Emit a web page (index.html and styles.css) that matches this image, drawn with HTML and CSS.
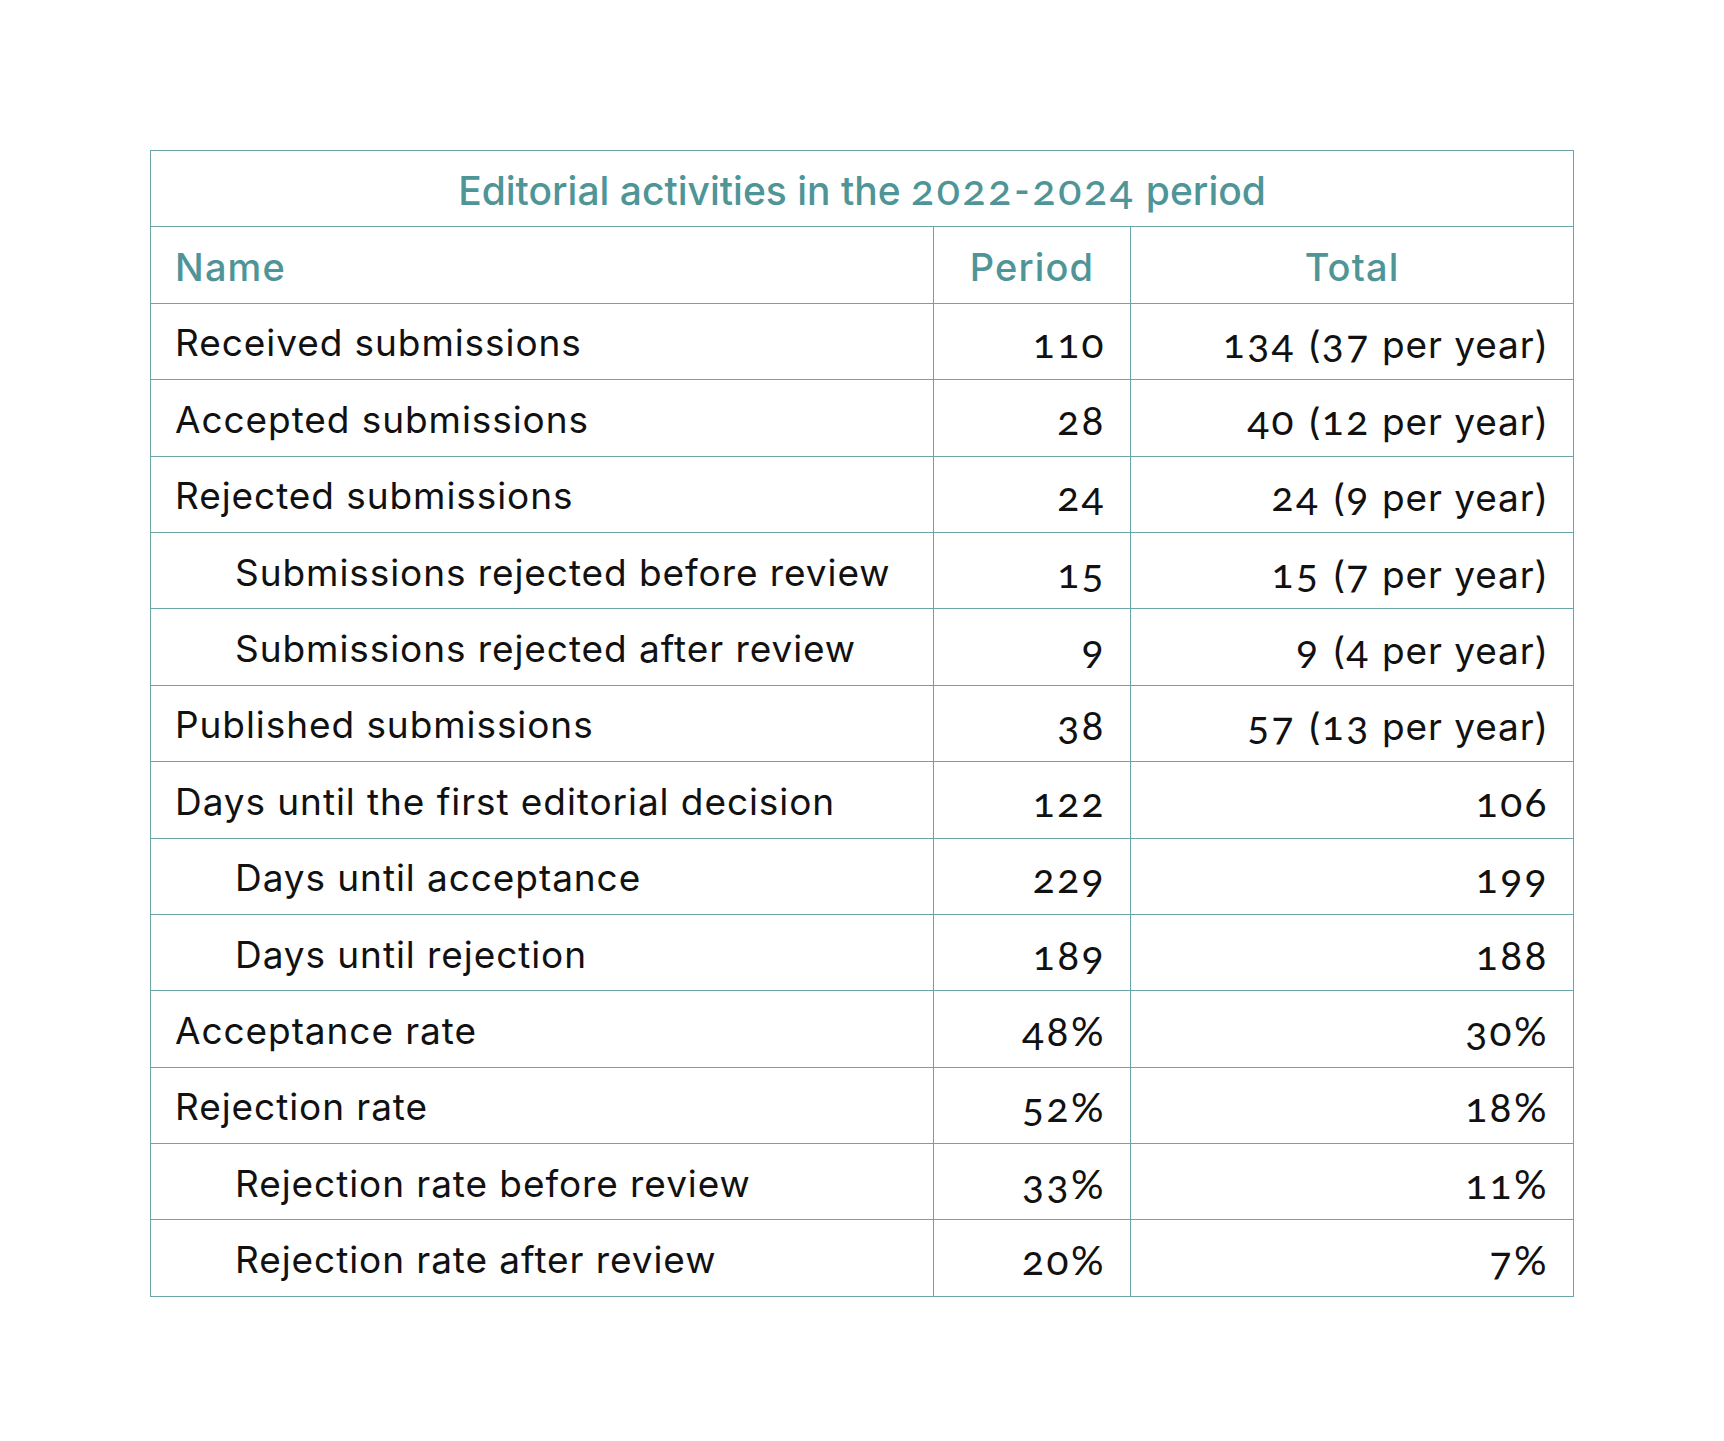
FILE: index.html
```html
<!DOCTYPE html>
<html lang="en">
<head>
<meta charset="utf-8">
<title>Editorial activities</title>
<link rel="stylesheet" href="styles.css">
</head>
<body>
<main class="page">
  <table class="stats">
    <colgroup>
      <col class="c-name">
      <col class="c-period">
      <col class="c-total">
    </colgroup>
    <thead>
      <tr class="title-row"><th colspan="3" class="title">Editorial activities in the <span class="n">2022-2024</span> period</th></tr>
      <tr class="head-row">
        <th class="h-name">Name</th>
        <th class="h-center">Period</th>
        <th class="h-center">Total</th>
      </tr>
    </thead>
    <tbody>
      <tr><td class="name">Received submissions</td><td class="num"><span class="n">110</span></td><td class="num"><span class="n">134</span> (<span class="n">37</span> per year)</td></tr>
      <tr><td class="name">Accepted submissions</td><td class="num"><span class="n">28</span></td><td class="num"><span class="n">40</span> (<span class="n">12</span> per year)</td></tr>
      <tr><td class="name">Rejected submissions</td><td class="num"><span class="n">24</span></td><td class="num"><span class="n">24</span> (<span class="n">9</span> per year)</td></tr>
      <tr><td class="name sub">Submissions rejected before review</td><td class="num"><span class="n">15</span></td><td class="num"><span class="n">15</span> (<span class="n">7</span> per year)</td></tr>
      <tr><td class="name sub">Submissions rejected after review</td><td class="num"><span class="n">9</span></td><td class="num"><span class="n">9</span> (<span class="n">4</span> per year)</td></tr>
      <tr><td class="name">Published submissions</td><td class="num"><span class="n">38</span></td><td class="num"><span class="n">57</span> (<span class="n">13</span> per year)</td></tr>
      <tr><td class="name">Days until the first editorial decision</td><td class="num"><span class="n">122</span></td><td class="num"><span class="n">106</span></td></tr>
      <tr><td class="name sub">Days until acceptance</td><td class="num"><span class="n">229</span></td><td class="num"><span class="n">199</span></td></tr>
      <tr><td class="name sub">Days until rejection</td><td class="num"><span class="n">189</span></td><td class="num"><span class="n">188</span></td></tr>
      <tr><td class="name">Acceptance rate</td><td class="num"><span class="n">48%</span></td><td class="num"><span class="n">30%</span></td></tr>
      <tr><td class="name">Rejection rate</td><td class="num"><span class="n">52%</span></td><td class="num"><span class="n">18%</span></td></tr>
      <tr><td class="name sub">Rejection rate before review</td><td class="num"><span class="n">33%</span></td><td class="num"><span class="n">11%</span></td></tr>
      <tr><td class="name sub">Rejection rate after review</td><td class="num"><span class="n">20%</span></td><td class="num"><span class="n">7%</span></td></tr>
    </tbody>
  </table>
</main>
</body>
</html>
```

FILE: styles.css
```css
html, body {
  margin: 0;
  padding: 0;
  background: #ffffff;
}

.page {
  padding: 150px 0 0 150px;
}

.stats {
  border-collapse: collapse;
  width: 1423px;
  table-layout: fixed;
  font-family: Inter, "Liberation Sans", Arial, sans-serif;
  font-size: 37px;
  letter-spacing: 0.025em;
  color: #111111;
}

.c-name { width: 783px; }
.c-period { width: 197px; }
.c-total { width: 443px; }

.stats th,
.stats td {
  border: 1px solid #6ba6a7;
  height: 76.4px;
  padding: 3px 24px 0;
  box-sizing: border-box;
  vertical-align: middle;
  white-space: nowrap;
}

.stats th {
  color: #4f9597;
  font-weight: 500;
  font-size: 38px;
  letter-spacing: 0.03em;
}

.stats th.title {
  text-align: center;
  font-size: 39px;
  letter-spacing: 0;
  padding-top: 0;
}

.h-name { text-align: left; }
.h-center { text-align: center; }

.name { text-align: left; }
.name.sub { padding-left: 84px; }

.num { text-align: right; }

.n {
  font-family: Lato, "Liberation Sans", sans-serif;
  font-size: 1.1em;
  font-variant-numeric: oldstyle-nums;
  font-feature-settings: "onum" 1;
  letter-spacing: 0.06em;
}
```
